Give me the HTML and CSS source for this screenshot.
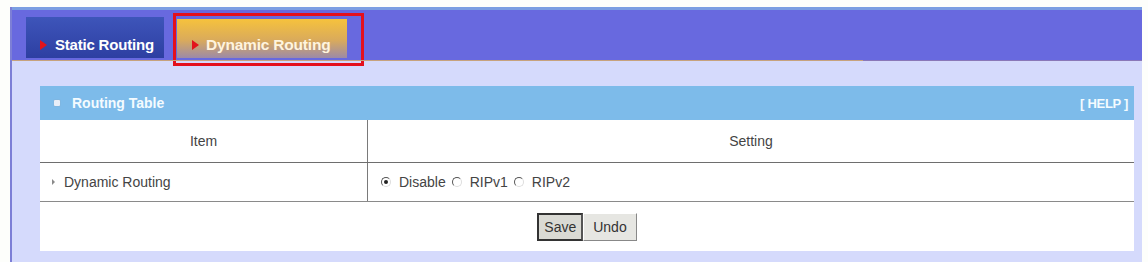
FILE: index.html
```html
<!DOCTYPE html>
<html lang="en">
<head>
  <meta charset="UTF-8">
  <title>Dynamic Routing</title>
  <link rel="stylesheet" href="styles.css">
</head>
<body>

  <!-- frame -->
  <div class="frame">

    <!-- tab bar -->
    <div class="tab-bar">
      <div class="tab tab-static"><span class="tab-arrow"></span>Static Routing</div>
      <div class="tab tab-dynamic"><span class="tab-arrow"></span>Dynamic Routing</div>
      <div class="mark-box"></div>
    </div>

    <!-- panel -->
    <div class="panel">
      <div class="box">
        <div class="box-head">
          <span class="head-title"><span class="head-icon"></span>Routing Table</span>
          <span class="head-help">[ HELP ]</span>
        </div>
        <div class="row row-head">
          <div class="cell cell-item">Item</div>
          <div class="cell cell-setting">Setting</div>
        </div>
        <div class="row row-data">
          <div class="cell cell-item left"><span class="row-arrow"></span>Dynamic Routing</div>
          <div class="cell cell-setting left">
            <label class="radio"><span class="radio-dot checked"></span>Disable</label>
            <label class="radio"><span class="radio-dot"></span>RIPv1</label>
            <label class="radio"><span class="radio-dot"></span>RIPv2</label>
          </div>
        </div>
        <div class="row row-buttons">
          <button class="btn btn-focus">Save</button><button class="btn btn-undo">Undo</button>
        </div>
      </div>
    </div>

  </div>

</body>
</html>
```

FILE: styles.css
```css
/* === page === */
body {
  margin: 0;
  background: #fdfefb;
  font-family: "Liberation Sans", Arial, sans-serif;
  color: #444;
}
.frame {
  margin: 7px 0 0 10px;
  width: 1132px;
  height: 255px;
  border-left: 2px solid #7d7fd6;
  background: #d5dafc;
  box-sizing: border-box;
}

/* === tab bar === */
.tab-bar {
  position: relative;
  height: 54px;
  box-sizing: border-box;
  background: #6869df;
  border-top: 3px solid #7b9ee2;
  display: flex;
  align-items: flex-end;
  padding: 0 0 3px 14px;
  box-shadow: inset 0 -1px 0 #8a78b8;
}
.tab-bar::after {
  content: "";
  position: absolute;
  left: 0;
  bottom: 0;
  width: 851px;
  height: 1px;
  background: #c7a27c;
}
.tab {
  box-sizing: border-box;
  font-weight: bold;
  font-size: 15px;
  line-height: 20px;
  white-space: nowrap;
  display: flex;
  align-items: center;
  letter-spacing: -0.2px;
}
.tab-static {
  width: 138px;
  height: 41px;
  padding: 14px 0 0 14px;
  color: #fff;
  background: linear-gradient(#3e55ba, #2d3fa2);
}
.tab-dynamic {
  width: 170px;
  height: 39px;
  margin-left: 13px;
  padding: 12px 0 0 15px;
  color: #fff4de;
  font-size: 15.5px;
  background: linear-gradient(#f6c23c, #d9aa5c 55%, #9c8aa8);
}
.tab-arrow {
  display: inline-block;
  width: 0;
  height: 0;
  border-top: 5px solid transparent;
  border-bottom: 5px solid transparent;
  border-left: 7px solid #e2141c;
  margin-right: 8px;
}
.tab-dynamic .tab-arrow {
  margin-right: 7px;
}
.mark-box {
  position: absolute;
  left: 161px;
  top: 3px;
  width: 191px;
  height: 53px;
  box-sizing: border-box;
  border: 3px solid #e4101c;
}

/* === panel === */
.panel {
  padding: 25px 8px 0 28px;
}
.box {
  background: #fff;
}
.box-head {
  height: 34px;
  background: #7dbbea;
  display: flex;
  align-items: center;
  justify-content: space-between;
  padding: 0 6px 0 14px;
  color: #f4fbff;
  font-size: 14px;
  font-weight: bold;
}
.head-title {
  display: flex;
  align-items: center;
}
.head-icon {
  display: inline-block;
  width: 6px;
  height: 6px;
  background: #e8eef8;
  border-radius: 1px;
  margin-right: 12px;
  box-shadow: 0 0 1px #999;
}
.head-help {
  font-size: 13px;
  letter-spacing: -0.3px;
}
.row {
  display: flex;
  border-bottom: 1px solid #8a8a8a;
  font-size: 14px;
}
.row-head {
  height: 42px;
  border-bottom-color: #6e6e6e;
}
.row-data {
  height: 38px;
}
.cell {
  box-sizing: border-box;
  display: flex;
  align-items: center;
  justify-content: center;
}
.cell-item {
  width: 328px;
  border-right: 1px solid #7a7a7a;
}
.cell-setting {
  flex: 1;
}
.left {
  justify-content: flex-start;
}
.row-data .cell-item {
  padding-left: 12px;
}
.row-data .cell-setting {
  padding-left: 13px;
}
.row-arrow {
  display: inline-block;
  width: 0;
  height: 0;
  border-top: 3px solid transparent;
  border-bottom: 3px solid transparent;
  border-left: 3px solid #8a8a8a;
  margin-right: 9px;
}
.radio {
  display: flex;
  align-items: center;
  margin-right: 6px;
}
.radio-dot {
  position: relative;
  width: 8px;
  height: 8px;
  border-radius: 50%;
  border: 1px solid;
  border-color: #555 #ddd #ddd #555;
  margin-right: 8px;
}
.radio-dot.checked::after {
  content: "";
  position: absolute;
  left: 2px;
  top: 2px;
  width: 4px;
  height: 4px;
  border-radius: 50%;
  background: #222;
}
.row-buttons {
  height: 49px;
  border-bottom: none;
  justify-content: center;
  align-items: center;
}
.btn {
  font-family: "Liberation Sans", Arial, sans-serif;
  font-size: 14px;
  color: #333;
  height: 28px;
  padding: 0 5px;
  background: #e6e6e2;
  border: 1px solid;
  border-color: #fff #888 #888 #fff;
}
.btn-undo {
  padding: 0 9px;
}
.btn-focus {
  border: 2px solid #333;
  border-right-color: #555;
  background: #dadad4;
}
```
